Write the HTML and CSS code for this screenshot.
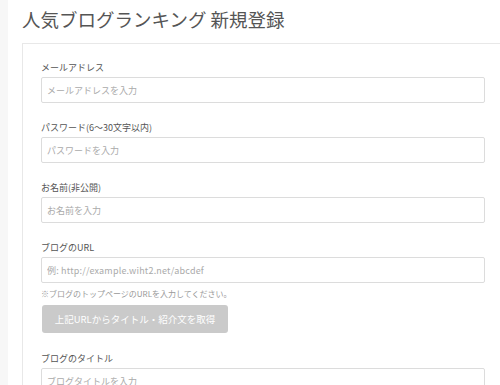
FILE: index.html
```html
<!DOCTYPE html>
<html lang="ja">
<head>
    <meta charset="UTF-8">
    <meta name="viewport" content="width=device-width, initial-scale=1.0">
    <title>人気ブログランキング 新規登録</title>

    <link rel="stylesheet" href="styles.css">
</head>
<body>

<div class="side"></div>

<div class="main">
    <h1>人気ブログランキング 新規登録</h1>

    <form class="card">
        <div class="field">
            <label>メールアドレス</label>
            <input type="text" placeholder="メールアドレスを入力">
        </div>

        <div class="field">
            <label>パスワード(6〜30文字以内)</label>
            <input type="password" placeholder="パスワードを入力">
        </div>

        <div class="field">
            <label>お名前(非公開)</label>
            <input type="text" placeholder="お名前を入力">
        </div>

        <div class="field">
            <label>ブログのURL</label>
            <input type="text" class="url" placeholder="例: http://example.wiht2.net/abcdef">
            <p class="note">※ブログのトップページのURLを入力してください。</p>
            <button type="button" class="fetch" disabled>上記URLからタイトル・紹介文を取得</button>
        </div>

        <div class="field">
            <label>ブログのタイトル</label>
            <input type="text" placeholder="ブログタイトルを入力">
        </div>
    </form>
</div>

</body>
</html>
```

FILE: styles.css
```css
html, body {
    overflow: hidden;
}

body {
    font-family: "Noto Sans CJK JP", "Liberation Sans", sans-serif;
    background-color: #fff;
    margin: 0;
    padding: 0;
    display: flex;
    min-height: 385px;
}

.side {
    width: 8px;
    flex-shrink: 0;
    background-color: #f7f7f7;
}

.main {
    padding-left: 14px;
}

h1 {
    color: #555;
    font-size: 18.5px;
    font-weight: normal;
    line-height: 26px;
    margin: 0;
    padding-top: 6px;
    white-space: nowrap;
}

.card {
    margin-top: 11px;
    width: 444px;
    padding: 17px 18px 20px;
    border: 1px solid #e8e8e8;
}

.field {
    margin-bottom: 18px;
}

.field label {
    display: block;
    font-size: 9px;
    line-height: 14px;
    color: #555;
    margin-bottom: 2px;
    white-space: nowrap;
}

.field input {
    display: block;
    width: 100%;
    height: 26px;
    box-sizing: border-box;
    padding: 0 5px;
    border: 1px solid #dcdcdc;
    border-radius: 2px;
    font-family: inherit;
    font-size: 9px;
    color: #333;
}

.field input.url {
    letter-spacing: 0.2px;
}

.field input::placeholder {
    color: #aaa;
}

.note {
    font-size: 8px;
    line-height: 14px;
    color: #999;
    margin: 4px 0 0;
    white-space: nowrap;
}

.fetch {
    margin: 4px 0 1px 1px;
    width: 186px;
    height: 28px;
    border: none;
    border-radius: 3px;
    background-color: #cacaca;
    color: #fff;
    font-family: inherit;
    font-size: 9.5px;
}
```
